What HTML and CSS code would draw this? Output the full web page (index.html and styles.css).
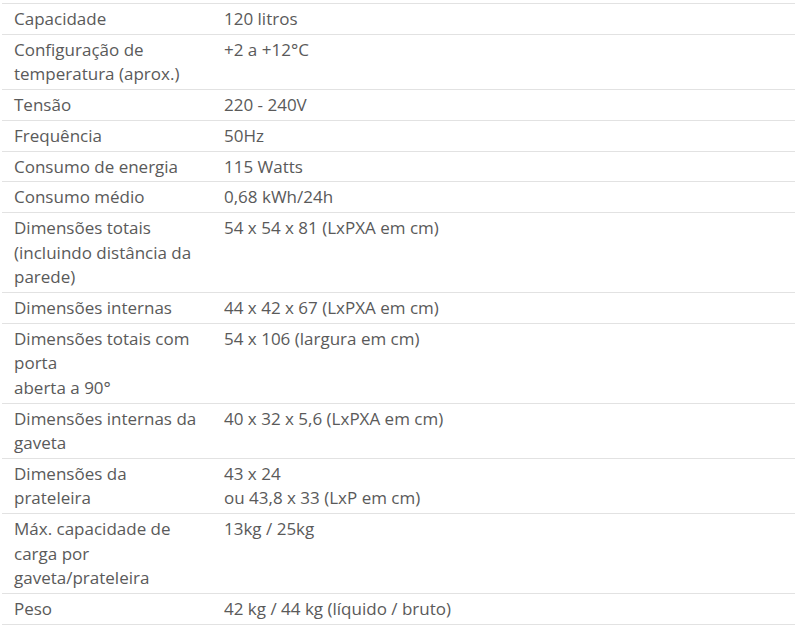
FILE: index.html
```html
<!DOCTYPE html>
<html lang="pt">
<head>
<meta charset="utf-8">
<link rel="stylesheet" href="styles.css">
</head>
<body>
<div class="specs">
<div class="row"><div class="k">Capacidade</div><div class="v">120 litros</div></div>
<div class="row"><div class="k">Configuração de temperatura (aprox.)</div><div class="v">+2 a +12°C</div></div>
<div class="row"><div class="k">Tensão</div><div class="v">220 - 240V</div></div>
<div class="row"><div class="k">Frequência</div><div class="v">50Hz</div></div>
<div class="row"><div class="k">Consumo de energia</div><div class="v">115 Watts</div></div>
<div class="row"><div class="k">Consumo médio</div><div class="v">0,68 kWh/24h</div></div>
<div class="row"><div class="k">Dimensões totais (incluindo distância da parede)</div><div class="v">54 x 54 x 81 (LxPXA em cm)</div></div>
<div class="row"><div class="k">Dimensões internas</div><div class="v">44 x 42 x 67 (LxPXA em cm)</div></div>
<div class="row"><div class="k">Dimensões totais com porta<br>aberta a 90°</div><div class="v">54 x 106 (largura em cm)</div></div>
<div class="row"><div class="k">Dimensões internas da gaveta</div><div class="v">40 x 32 x 5,6 (LxPXA em cm)</div></div>
<div class="row"><div class="k">Dimensões da prateleira</div><div class="v">43 x 24<br>ou 43,8 x 33 (LxP em cm)</div></div>
<div class="row"><div class="k">Máx. capacidade de carga por gaveta/prateleira</div><div class="v">13kg / 25kg</div></div>
<div class="row"><div class="k">Peso</div><div class="v">42 kg / 44 kg (líquido / bruto)</div></div>
</div>
</body>
</html>
```
FILE: styles.css
```css
html, body {
  margin: 0;
  padding: 0;
  background: #ffffff;
}
body {
  padding: 3px 0 0 2px;
  font-family: "Open Sans", "Liberation Sans", sans-serif;
  font-size: 17px;
  color: #5a5a5a;
}
.specs {
  width: 793px;
  border-top: 1px solid #e2e2e2;
}
.row {
  display: grid;
  grid-template-columns: 210px 1fr;
  border-bottom: 1px solid #e2e2e2;
  line-height: 24.5px;
}
.k,
.v {
  padding: 3px 12px 2.3px 12px;
}
.k {
  padding-right: 10px;
}
```
